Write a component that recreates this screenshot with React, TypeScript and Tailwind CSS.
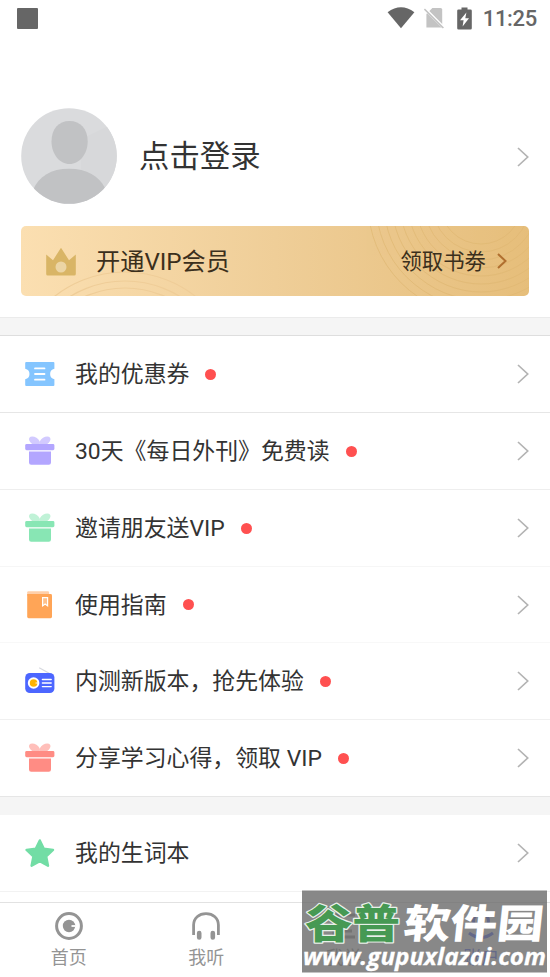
import type { ReactNode } from "react"

type MenuItem = {
  id: number
  label: string
  icon: ReactNode
  dot: boolean
  className: string
}

const GiftIcon = ({ color, bow }: { color: string; bow: string }) => (
  <svg width="30" height="30" viewBox="0 0 30 30">
    <g fill={bow}>
      <ellipse cx="9.5" cy="5" rx="6" ry="3.7" transform="rotate(32 9.5 5)" />
      <ellipse cx="20" cy="5" rx="6" ry="3.7" transform="rotate(-32 20 5)" />
    </g>
    <rect x="0.2" y="8" width="29.2" height="6.2" rx="1.4" fill={color} />
    <path d="M4 15.6h22v11a2.2 2.2 0 0 1-2.2 2.2H6.2A2.2 2.2 0 0 1 4 26.6z" fill={color} />
  </svg>
)

const CouponIcon = () => (
  <svg width="30" height="30" viewBox="0 0 30 30">
    <path d="M1.2 3h27.2q1 0 1 1v5.8a5.3 5.3 0 0 0 0 10.4V26q0 1-1 1H1.2q-1 0-1-1v-5.8a5.3 5.3 0 0 0 0-10.4V4q0-1 1-1z" fill="#84c5ff" />
    <path d="M10 9.4h9.5M10 15h9.5M10 20.7h9.5" stroke="#fff" strokeWidth="1.8" strokeLinecap="round" />
  </svg>
)

const BookIcon = () => (
  <svg width="30" height="30" viewBox="0 0 30 30">
    <path d="M3.4 1.2h19.5q1.2 0 1.2 1.2V6H2.2V2.4q0-1.2 1.2-1.2z" fill="#ffcfa9" />
    <path d="M2.2 4.1H25.6q1.4 0 1.4 1.4v21.3q0 1.4-1.4 1.4H3.6q-1.4 0-1.4-1.4z" fill="#ffa557" />
    <path d="M17.6 7.7h5v8.2l-2.5-1.8-2.5 1.8z" fill="#ffc18b" stroke="#fff" strokeWidth="1.2" />
  </svg>
)

const RadioIcon = () => (
  <svg width="30" height="30" viewBox="0 0 30 30">
    <path d="M14.2 1.8l10 5.4" stroke="#d7d9df" strokeWidth="1.3" />
    <rect x="0.2" y="7" width="29.2" height="20" rx="4.6" fill="#4c66ff" />
    <circle cx="8.6" cy="17" r="5.8" fill="#fff" />
    <circle cx="8.6" cy="17" r="3.8" fill="#ffb300" />
    <path d="M9.6 17l3-0.8v1.6z" fill="#fff" />
    <path d="M17.4 13.5h8.8M17.4 17h8.8M17.4 20.6h8.8" stroke="#fff" strokeWidth="1.4" strokeLinecap="round" />
  </svg>
)

const StarIcon = () => (
  <svg width="30" height="30" viewBox="0 0 30 30">
    <path
      d="M14.8 2.4l3.9 8.2 9.3 1.3-6.8 6.5 1.8 9.3-8.2-4.4-8.2 4.4 1.8-9.3-6.8-6.5 9.3-1.3z"
      fill="#72dda5"
      stroke="#72dda5"
      strokeWidth="2.4"
      strokeLinejoin="round"
    />
  </svg>
)

const Chevron = () => (
  <svg width="12" height="20" viewBox="0 0 12 20" fill="none">
    <path d="M1 1l9.7 9L1 19" stroke="#b3b3b3" strokeWidth="1.7" />
  </svg>
)

const menu: MenuItem[] = [
  { id: 1, label: "我的优惠券", icon: <CouponIcon />, dot: true, className: "h-[77px] border-[#e6e6e6]" },
  { id: 2, label: "30天《每日外刊》免费读", icon: <GiftIcon color="#b3a6ff" bow="#d2caff" />, dot: true, className: "h-[77px] border-[#eeeeee]" },
  { id: 3, label: "邀请朋友送VIP", icon: <GiftIcon color="#88e6b4" bow="#c0f2d7" />, dot: true, className: "h-[77px] border-[#f6f6f6]" },
  { id: 4, label: "使用指南", icon: <BookIcon />, dot: true, className: "h-[76px] border-[#f8f8f8]" },
  { id: 5, label: "内测新版本，抢先体验", icon: <RadioIcon />, dot: true, className: "h-[77px] border-[#f0f0f0]" },
  { id: 6, label: "分享学习心得，领取 VIP", icon: <GiftIcon color="#ff8c84" bow="#ffbfba" />, dot: true, className: "h-[77px] border-[#e6e6e6]" },
]

const words: MenuItem = { id: 7, label: "我的生词本", icon: <StarIcon />, dot: false, className: "h-[77px] border-[#f2f2f2]" }

const MenuRow = ({ item }: { item: MenuItem }) => (
  <li className={`flex items-center border-b pl-[25px] pr-[21px] ${item.className}`}>
    {item.icon}
    <span className="ml-5 pt-[2px] text-[22.9px] leading-8">{item.label}</span>
    {item.dot && <span className="ml-4 size-[11px] rounded-full bg-[#ff5050]" />}
    <span className="ml-auto">
      <Chevron />
    </span>
  </li>
)

const StatusBar = () => (
  <header className="flex h-9 items-center pl-[17px] pr-[13px]">
    <span className="size-[21px] rounded-[1px] bg-[#666666]" />
    <svg className="ml-auto" width="28" height="22" viewBox="0 0 28 22">
      <path d="M0.6 5.2Q14-4.6 27.4 5.2L14 21.2z" fill="#666" />
    </svg>
    <svg className="ml-[9px]" width="20" height="22" viewBox="0 0 20 22">
      <path d="M8.4 1h8.2q1.6 0 1.6 1.6v17.8H2.4V7z" fill="#c3c3c3" />
      <path d="M-0.5 0.3l20 20" stroke="#fff" strokeWidth="3" />
      <path d="M0.4 2l19 19" stroke="#c3c3c3" strokeWidth="1.6" />
    </svg>
    <svg className="ml-[13px]" width="15" height="23" viewBox="0 0 15 23">
      <path d="M4.5 0.5h6v2h3q1.3 0 1.3 1.3v17.4q0 1.3-1.3 1.3h-12q-1.3 0-1.3-1.3V3.8q0-1.3 1.3-1.3h3z" fill="#666" />
      <path d="M9.4 5.4L3 13.2h3.6l-1 6.2 6.4-8.2H8.3z" fill="#fff" />
    </svg>
    <span className="ml-[11px] pt-px text-[22px] leading-none font-medium tracking-[-0.3px] text-[#666666]">11:25</span>
  </header>
)

const Avatar = () => (
  <svg width="96" height="96" viewBox="0 0 96 96">
    <defs>
      <clipPath id="avatar">
        <circle cx="48" cy="48" r="47.8" />
      </clipPath>
    </defs>
    <g clipPath="url(#avatar)">
      <rect width="96" height="96" fill="#dadbdd" />
      <path d="M60 31L96 14v82H60z" fill="#d7d8da" />
      <path d="M48.5 13c11 0 18.2 8 18.2 20.5S58.5 56 48.5 56 30.5 46 30.5 33.5 37.5 13 48.5 13z" fill="#c1c2c4" />
      <path d="M12 82C18 68 30 60.7 48 60.7S78 68 84 80v16H12z" fill="#c1c2c4" />
    </g>
  </svg>
)

const rings = [41, 49, 57, 65, 73, 81, 89, 97, 105, 113]

const VipBanner = () => (
  <section className="relative mx-[21px] flex h-[70px] items-center overflow-hidden rounded-[5px] bg-linear-to-r from-[#fbdfb1] via-[#efce98] to-[#e6be7b] pl-[25px] pr-[22px] text-[#3b2f1c]">
    <svg className="absolute inset-0" width="508" height="70" viewBox="0 0 508 70" fill="none">
      <g stroke="#efcd98" strokeWidth="1.2">
        <circle cx="104" cy="160" r="114" />
        <circle cx="104" cy="160" r="105" />
        <circle cx="104" cy="160" r="98" />
      </g>
      <g stroke="#e0b873" strokeWidth="1" opacity="0.7">
        {rings.map((r) => (
          <circle key={r} cx="460" cy="-23" r={r} />
        ))}
      </g>
    </svg>
    <svg className="relative" width="30" height="29" viewBox="0 0 30 29">
      <path d="M0.2 7.6L7 13.2 15 0.8 23 13.2 29.8 7.6V27q0 1.5-1.5 1.5H1.7Q0.2 28.5 0.2 27z" fill="#d9b566" />
      <circle cx="15" cy="20" r="5.5" fill="#ecd5a5" />
    </svg>
    <span className="relative ml-5 pt-[2px] text-[24.2px] leading-8">开通VIP会员</span>
    <span className="relative ml-auto pt-[2px] text-[21.4px] leading-8">领取书劵</span>
    <svg className="relative ml-[11px]" width="10" height="16" viewBox="0 0 10 16" fill="none">
      <path d="M1 1l7.5 7L1 15" stroke="#b06f2f" strokeWidth="2" />
    </svg>
  </section>
)

const TabBar = () => (
  <nav className="grid h-[75px] grid-cols-4 border-t border-[#e2e2e2] bg-white text-[18px] leading-6 text-[#949494]">
    <a className="flex flex-col items-center pt-[9px]">
      <svg width="28" height="28" viewBox="0 0 28 28" fill="none">
        <circle cx="14" cy="14" r="12.4" stroke="#949494" strokeWidth="3" />
        <circle cx="14" cy="14" r="6.2" fill="#949494" />
        <path d="M16.5 14h4" stroke="#fff" strokeWidth="1.8" />
      </svg>
      <span className="mt-[6px]">首页</span>
    </a>
    <a className="flex flex-col items-center pt-[9px]">
      <svg width="28" height="28" viewBox="0 0 28 28" fill="none" stroke="#949494">
        <path d="M1.6 23V13C1.6 6 7 1.6 14 1.6S26.4 6 26.4 13v10" strokeWidth="2.8" />
        <path d="M7.2 21v4.5M20.8 21v4.5" strokeWidth="4.6" strokeLinecap="round" />
      </svg>
      <span className="mt-[6px]">我听</span>
    </a>
    <a className="flex flex-col items-center pt-[9px]">
      <svg width="28" height="28" viewBox="0 0 28 28" fill="none" stroke="#949494" strokeWidth="3">
        <path d="M25 3H4v22h21M10 19h12" />
      </svg>
      <span className="mt-[6px]">我学</span>
    </a>
    <a className="flex flex-col items-center pt-[9px] text-[#4c66ff]">
      <svg width="28" height="28" viewBox="0 0 28 28" fill="none" stroke="currentColor" strokeWidth="3">
        <circle cx="14" cy="9" r="7.5" />
        <path d="M2 21q12 9 24 0" />
      </svg>
      <span className="mt-[6px]">账户</span>
    </a>
  </nav>
)

// The site stamp lets the last two tabs show through faintly
const Watermark = () => (
  <svg className="absolute left-[302px] top-[890px]" width="246" height="83" viewBox="0 0 246 83">
    <rect y="0.5" width="245" height="82" fill="#6a6a6a" fillOpacity="0.8" />
    <g fontFamily="'Noto Sans CJK SC', sans-serif" fontSize="40" fontWeight="900" strokeLinejoin="round">
      <text x="3" y="48" textLength="95" lengthAdjust="spacingAndGlyphs" fill="#469953" stroke="#e8f0e9" strokeWidth="2.4" paintOrder="stroke">
        谷普
      </text>
      <text x="101" y="48" textLength="140" lengthAdjust="spacingAndGlyphs" fill="#fff" transform="translate(4.5 0) skewX(-6)">
        软件园
      </text>
    </g>
    <text
      x="1"
      y="75"
      textLength="243"
      lengthAdjust="spacingAndGlyphs"
      fontFamily="'Open Sans', sans-serif"
      fontSize="24"
      fontStyle="italic"
      fontWeight="700"
      fill="#fff"
      stroke="#fff"
      strokeWidth="0.3"
    >
      www.gupuxlazai.com
    </text>
  </svg>
)

const App = () => {
  return (
    <div className="relative flex h-[977px] w-[550px] flex-col overflow-hidden bg-white font-[Roboto,'Noto_Sans_CJK_SC',sans-serif] text-[#333333]">
      <StatusBar />

      <section className="mt-[72px] flex h-24 items-center pl-[21px] pr-[21px]">
        <Avatar />
        <h1 className="ml-[22px] pt-[2px] text-[30.4px] leading-10">点击登录</h1>
        <span className="ml-auto pt-px">
          <Chevron />
        </span>
      </section>

      <div className="mt-[22px] mb-[21px]">
        <VipBanner />
      </div>

      <div className="h-[19px] shrink-0 border-y border-t-[#ebebeb] border-b-[#dedede] bg-[#f5f5f5]" />

      <ul>
        {menu.map((item) => (
          <MenuRow key={item.id} item={item} />
        ))}
      </ul>

      <div className="h-[18px] shrink-0 bg-[#f5f5f5]" />

      <ul>
        <MenuRow item={words} />
      </ul>

      <div className="mt-auto">
        <TabBar />
      </div>

      <Watermark />
    </div>
  )
}

export default App
